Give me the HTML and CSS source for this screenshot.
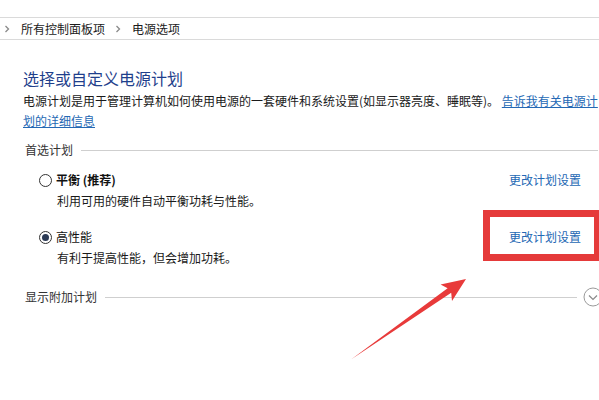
FILE: index.html
```html
<!DOCTYPE html>
<html lang="zh-CN">
<head>
<meta charset="utf-8">
<title>电源选项</title>
<link rel="stylesheet" href="styles.css">
</head>
<body>
<div class="page">
  <div class="topgap"></div>
  <nav class="crumbs">
    <span class="chev"><svg width="6" height="8" viewBox="0 0 6 8"><polyline points="1.5,1 4.5,4 1.5,7" fill="none" stroke="#8a8a8a" stroke-width="1.3"/></svg></span>
    <span class="crumb">所有控制面板项</span>
    <span class="chev"><svg width="6" height="8" viewBox="0 0 6 8"><polyline points="1.5,1 4.5,4 1.5,7" fill="none" stroke="#8a8a8a" stroke-width="1.3"/></svg></span>
    <span class="crumb">电源选项</span>
  </nav>

  <main class="content">
    <h1 class="title">选择或自定义电源计划</h1>
    <p class="desc">电源计划是用于管理计算机如何使用电源的一套硬件和系统设置(如显示器亮度、睡眠等)。 <a href="#" class="inline-link">告诉我有关电源计<br>划的详细信息</a></p>

    <div class="group-head">
      <span class="group-label">首选计划</span>
      <span class="rule"></span>
    </div>

    <div class="plan plan-first">
      <div class="plan-row">
        <label class="plan-name bold"><span class="radio"></span>平衡 (推荐)</label>
        <a href="#" class="plan-link">更改计划设置</a>
      </div>
      <div class="plan-desc">利用可用的硬件自动平衡功耗与性能。</div>
    </div>

    <div class="plan plan-second">
      <div class="plan-row">
        <label class="plan-name"><span class="radio checked"></span>高性能</label>
        <a href="#" class="plan-link">更改计划设置</a>
      </div>
      <div class="plan-desc">有利于提高性能，但会增加功耗。</div>
    </div>

    <div class="group-head more">
      <span class="group-label">显示附加计划</span>
      <span class="rule"></span>
      <span class="expand"><svg width="20" height="20" viewBox="0 0 20 20"><circle cx="10" cy="10" r="9" fill="#fff" stroke="#9a9a9a" stroke-width="1"/><polyline points="6,8.5 10,12.5 14,8.5" fill="none" stroke="#8a8a8a" stroke-width="1.2"/></svg></span>
    </div>
  </main>

  <div class="highlight"></div>
  <svg class="arrow" width="599" height="400" viewBox="0 0 599 400">
    <polygon points="466,279 440.6,284.5 447.6,288.2 351,359.6 451.2,292.7 452,300.9" fill="#e83a3a"/>
  </svg>
</div>
</body>
</html>
```

FILE: styles.css
```css
html, body {
  margin: 0;
  padding: 0;
  background: #ffffff;
  overflow: hidden;
}

body {
  font-family: "Noto Sans CJK SC", "Noto Sans", sans-serif;
  font-size: 12px;
  color: #1a1a1a;
}

.page {
  position: relative;
  width: 599px;
  height: 400px;
  overflow: hidden;
}

.topgap {
  height: 17px;
}

.crumbs {
  display: flex;
  align-items: center;
  height: 21px;
  border-top: 1px solid #dadada;
  border-bottom: 1px solid #dadada;
  padding-left: 4px;
}

.chev {
  display: flex;
  align-items: center;
  width: 6px;
  margin-right: 11px;
}

.crumb {
  line-height: 21px;
  color: #1a1a1a;
  margin-right: 10px;
}

.content {
  padding: 0 1px 0 23px;
}

.title {
  margin: 27px 0 0;
  font-size: 16px;
  font-weight: normal;
  line-height: 22px;
  color: #1f3f8c;
}

.desc {
  margin: 2px 0 0;
  line-height: 20px;
  color: #1a1a1a;
  white-space: nowrap;
}

.inline-link {
  color: #2468b4;
  text-decoration: underline;
}

.group-head {
  display: flex;
  align-items: center;
  margin-top: 9px;
  height: 20px;
  padding-left: 2px;
}

.group-label {
  color: #333333;
  line-height: 20px;
  margin-right: 8px;
}

.rule {
  flex: 1;
  height: 1px;
  background: #cfcfcf;
}

.plan {
  padding-left: 16px;
  padding-right: 17px;
}

.plan-first {
  margin-top: 10px;
}

.plan-second {
  margin-top: 16px;
}

.plan-row {
  display: flex;
  align-items: center;
  justify-content: space-between;
  height: 20px;
}

.plan-name {
  display: flex;
  align-items: center;
  line-height: 20px;
  color: #111111;
}

.bold {
  font-weight: bold;
}

.radio {
  box-sizing: border-box;
  width: 13px;
  height: 13px;
  border: 1px solid #333333;
  border-radius: 50%;
  margin-right: 4px;
  display: flex;
  align-items: center;
  justify-content: center;
  background: #fff;
}

.radio.checked::after {
  content: "";
  width: 7px;
  height: 7px;
  border-radius: 50%;
  background: #2b3a55;
}

.plan-link {
  color: #2468b4;
  text-decoration: none;
  line-height: 20px;
}

.plan-desc {
  margin-top: 1px;
  padding-left: 18px;
  line-height: 20px;
  color: #1a1a1a;
}

.group-head.more {
  margin-top: 19px;
  padding-right: 0;
}

.more .rule {
  margin-right: 6px;
}

.expand {
  display: flex;
  width: 20px;
  height: 20px;
  margin-right: -5px;
}

.highlight {
  position: absolute;
  left: 483px;
  top: 210px;
  width: 118px;
  height: 51px;
  box-sizing: border-box;
  border: 7px solid #e53a3a;
}

.arrow {
  position: absolute;
  left: 0;
  top: 0;
  pointer-events: none;
}
```
